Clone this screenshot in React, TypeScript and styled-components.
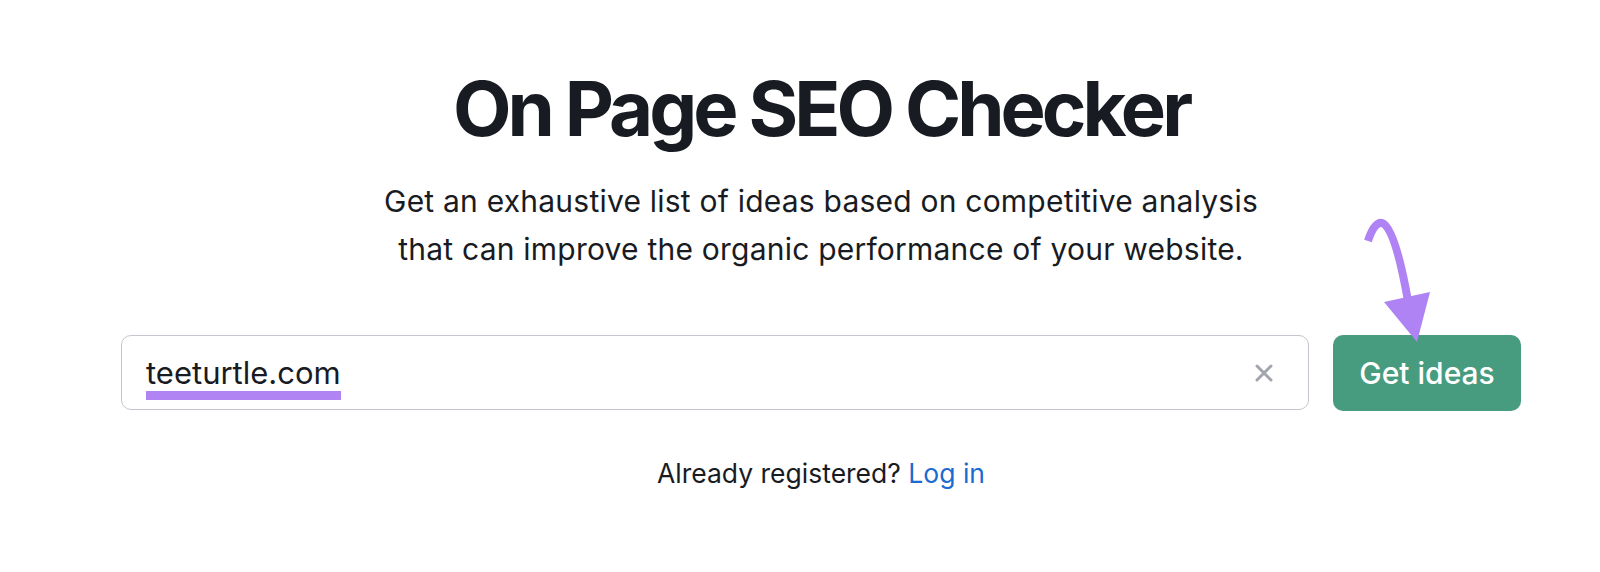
import React from "react";
import styled, { createGlobalStyle } from "styled-components";

const GlobalStyle = createGlobalStyle`
  html, body {
    margin: 0;
    padding: 0;
    background: #ffffff;
  }
  body {
    font-family: Inter, "Noto Sans", "Liberation Sans", sans-serif;
    color: #191b23;
    -webkit-font-smoothing: antialiased;
  }
`;

const Page = styled.main`
  width: 1600px;
  height: 572px;
  box-sizing: border-box;
  padding: 0 79px 0 121px;
  display: flex;
  flex-direction: column;
  align-items: center;
  overflow: hidden;
`;

const Title = styled.h1`
  margin: 68px 0 0;
  font-size: 76px;
  line-height: 80px;
  font-weight: 700;
  letter-spacing: -4px;
  color: #191b23;
  text-align: center;
`;

const Subtitle = styled.p`
  margin: 29px 0 0;
  font-size: 30px;
  line-height: 48px;
  font-weight: 400;
  letter-spacing: 0.22px;
  color: #191b23;
  text-align: center;
`;

const SearchRow = styled.form`
  margin-top: 62px;
  width: 100%;
  display: flex;
  gap: 24px;
  align-items: stretch;
`;

const InputBox = styled.div`
  flex: 1;
  height: 75px;
  box-sizing: border-box;
  border: 1.5px solid #c4c6cd;
  border-radius: 10px;
  display: flex;
  align-items: center;
  padding: 0 33px 0 24px;
`;

const Value = styled.div`
  flex: 1;
  font-size: 31px;
  color: #191b23;
`;

const Underlined = styled.span`
  display: inline-block;
  line-height: 36px;
  padding-top: 9px;
  border-bottom: 9px solid #b084f3;
`;

const ClearButton = styled.button`
  border: 0;
  background: none;
  padding: 0;
  width: 22px;
  height: 22px;
  display: flex;
  align-items: center;
  justify-content: center;
  cursor: pointer;
`;

const ButtonWrap = styled.div`
  position: relative;
  display: flex;
`;

const SubmitButton = styled.button`
  width: 188px;
  height: 76px;
  border: 0;
  border-radius: 10px;
  background: #479c7f;
  color: #ffffff;
  font-family: Inter, "Noto Sans", sans-serif;
  font-size: 30px;
  font-weight: 500;
  cursor: pointer;
`;

const Arrow = styled.svg`
  position: absolute;
  left: 22px;
  top: -120px;
  width: 80px;
  height: 130px;
  overflow: visible;
  pointer-events: none;
`;

const Footer = styled.p`
  margin: 46px 0 0;
  font-size: 26.5px;
  line-height: 32px;
  color: #191b23;
  text-align: center;
`;

const Link = styled.a`
  color: #1b6bd0;
  text-decoration: none;
`;

export default function App() {
  return (
    <>
      <GlobalStyle />
      <Page>
        <Title>On Page SEO Checker</Title>
        <Subtitle>
          Get an exhaustive list of ideas based on competitive analysis
          <br />
          that can improve the organic performance of your website.
        </Subtitle>
        <SearchRow onSubmit={(e) => e.preventDefault()}>
          <InputBox>
            <Value>
              <Underlined>teeturtle.com</Underlined>
            </Value>
            <ClearButton type="button" aria-label="Clear">
              <svg width="18" height="18" viewBox="0 0 18 18">
                <path
                  d="M2 2 L16 16 M16 2 L2 16"
                  stroke="#a3a5ae"
                  strokeWidth="3"
                  strokeLinecap="round"
                />
              </svg>
            </ClearButton>
          </InputBox>
          <ButtonWrap>
            <SubmitButton type="submit">Get ideas</SubmitButton>
            <Arrow viewBox="0 0 80 130">
              <path
                d="M13 26 C17 13 23 5 29 9 C39 17 47 52 53 86"
                fill="none"
                stroke="#b083f4"
                strokeWidth="8"
              />
              <polygon points="29,87 75,77 62,127" fill="#b083f4" />
            </Arrow>
          </ButtonWrap>
        </SearchRow>
        <Footer>
          Already registered? <Link href="#">Log in</Link>
        </Footer>
      </Page>
    </>
  );
}
